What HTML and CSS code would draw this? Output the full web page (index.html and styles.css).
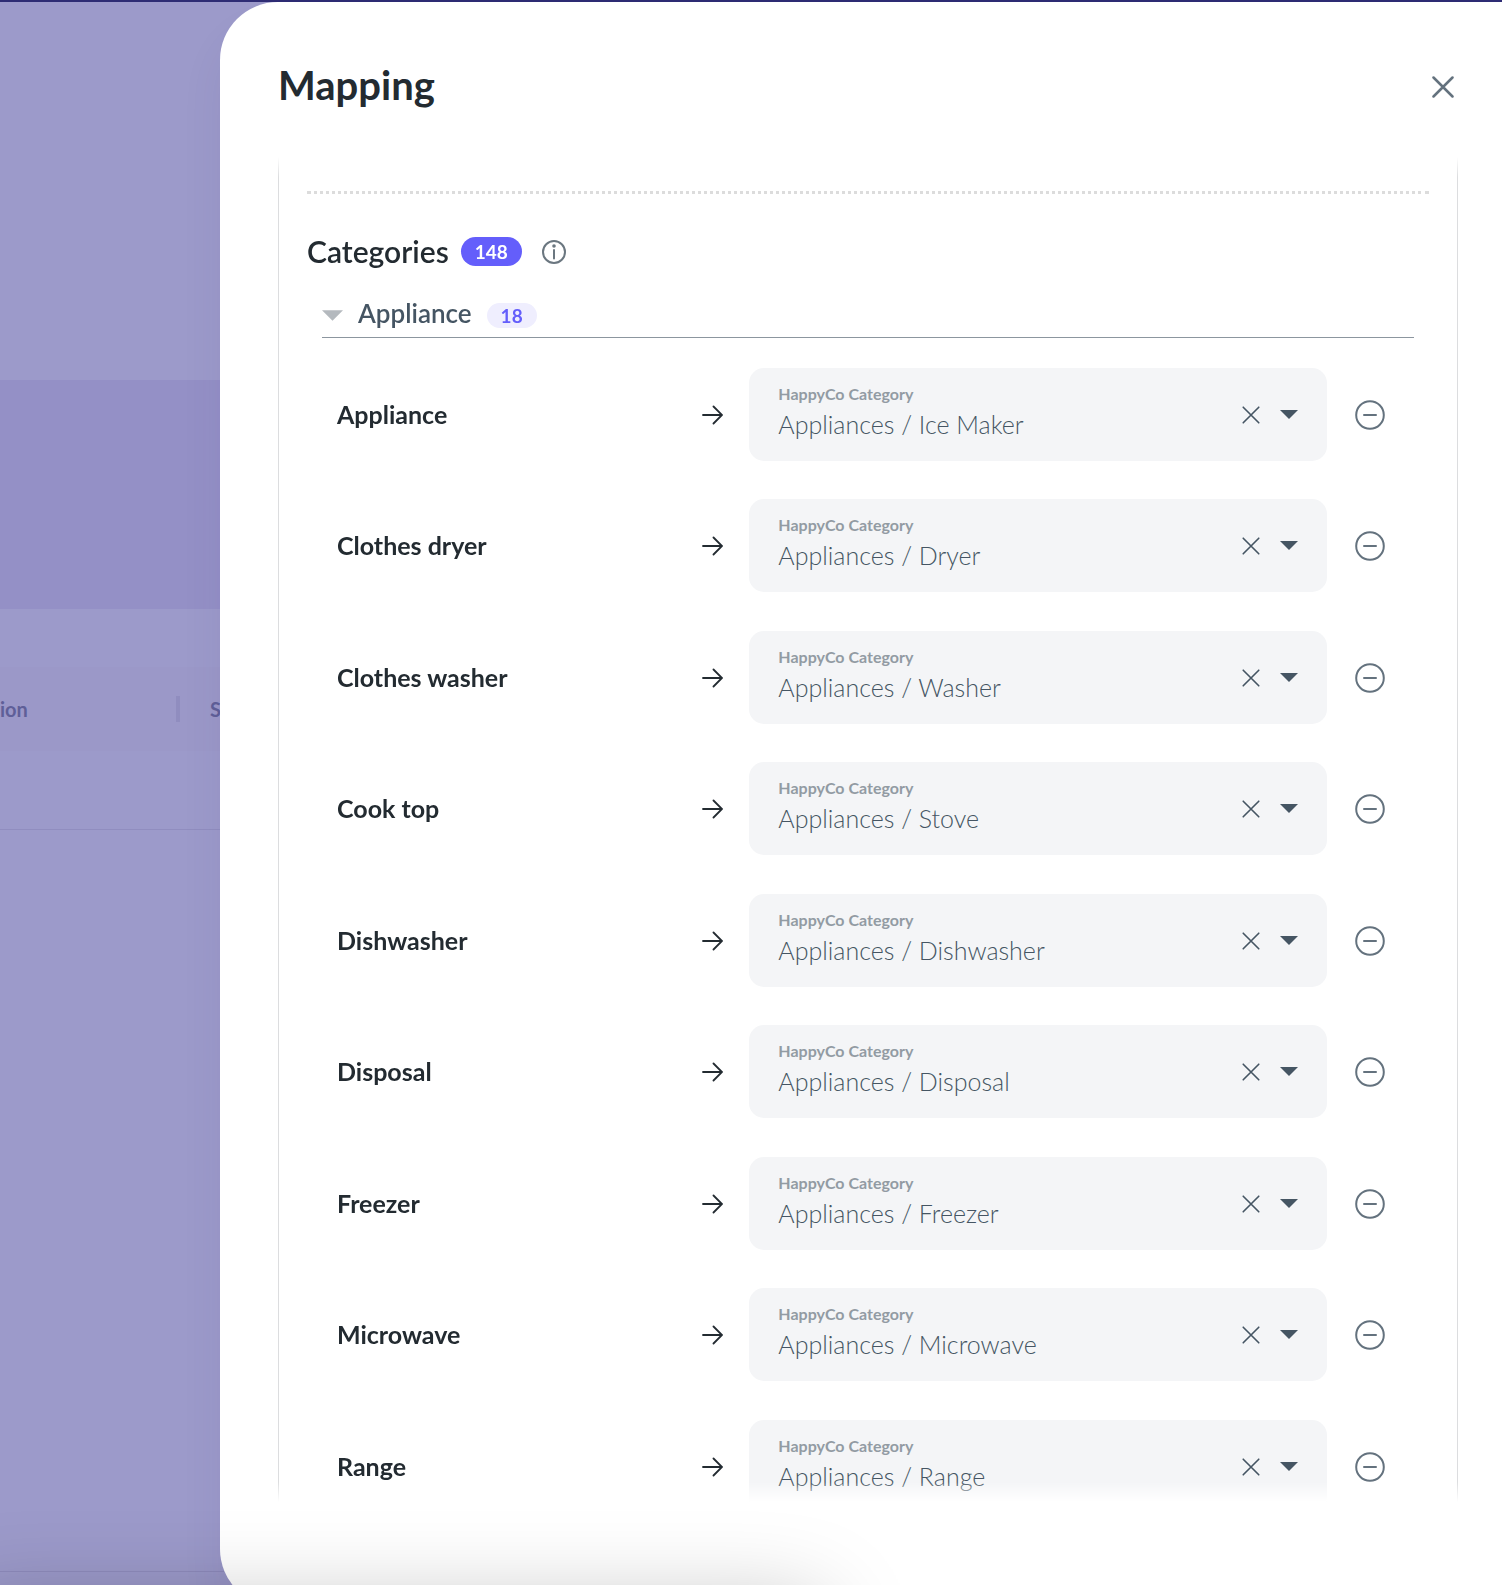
FILE: index.html
```html
<!DOCTYPE html>
<html lang="en">
<head>
<meta charset="UTF-8">
<meta name="viewport" content="width=device-width, initial-scale=1.0">
<title>Mapping</title>
<link rel="stylesheet" href="styles.css">
</head>
<body>
    <svg class="sprite" aria-hidden="true">
        <symbol id="arrow" viewBox="0 0 22 20"><path d="M2 10H21M12.5 1.5L21 10L12.5 18.5"/></symbol>
        <symbol id="cross" viewBox="0 0 22 22"><path d="M1.5 1.5L20.5 20.5M20.5 1.5L1.5 20.5"/></symbol>
        <symbol id="caret" viewBox="0 0 22 11"><path d="M0 0H22L11 11Z"/></symbol>
        <symbol id="minus" viewBox="0 0 30 30"><circle cx="15" cy="15" r="13.8"/><path d="M9 15H21"/></symbol>
    </svg>

    <!-- page behind the drawer -->
    <div class="page">
        <div class="page-bar"></div>
        <div class="page-top"></div>
        <div class="page-banner"></div>
        <div class="page-space"></div>
        <div class="page-head">
            <span>ion</span>
            <i class="divider"></i>
            <span>S</span>
        </div>
        <div class="page-row"></div>
        <div class="page-body"></div>
    </div>

    <div class="drawer" role="dialog" aria-labelledby="title">
        <header class="drawer-header">
            <h1 id="title">Mapping</h1>
            <button class="close" aria-label="Close"><svg><use href="#cross"/></svg></button>
        </header>
        <div class="scroll">
            <div class="box">
                <hr class="dots">
                <div class="section-head">
                    <h2>Categories</h2>
                    <span class="badge">148</span>
                    <button class="info" aria-label="Info">
                        <svg viewBox="0 0 24 24"><circle cx="12" cy="12" r="11"/><path d="M12 10V18.5"/><circle class="dot" cx="12" cy="6" r="1.8"/></svg>
                    </button>
                </div>
                <div class="group">
                    <button class="group-head">
                        <svg><use href="#caret"/></svg>
                        <span class="group-title">Appliance</span>
                        <span class="badge light">18</span>
                    </button>
                    <ul class="rows">
                        <li class="row">
                            <span class="name">Appliance</span>
                            <svg class="arrow"><use href="#arrow"/></svg>
                            <div class="field">
                                <div class="field-text">
                                    <label for="c1">HappyCo Category</label>
                                    <select id="c1"><option>Appliances / Ice Maker</option></select>
                                </div>
                                <button class="clear" aria-label="Clear"><svg><use href="#cross"/></svg></button>
                                <svg class="caret"><use href="#caret"/></svg>
                            </div>
                            <button class="remove" aria-label="Remove"><svg><use href="#minus"/></svg></button>
                        </li>
                        <li class="row">
                            <span class="name">Clothes dryer</span>
                            <svg class="arrow"><use href="#arrow"/></svg>
                            <div class="field">
                                <div class="field-text">
                                    <label for="c2">HappyCo Category</label>
                                    <select id="c2"><option>Appliances / Dryer</option></select>
                                </div>
                                <button class="clear" aria-label="Clear"><svg><use href="#cross"/></svg></button>
                                <svg class="caret"><use href="#caret"/></svg>
                            </div>
                            <button class="remove" aria-label="Remove"><svg><use href="#minus"/></svg></button>
                        </li>
                        <li class="row">
                            <span class="name">Clothes washer</span>
                            <svg class="arrow"><use href="#arrow"/></svg>
                            <div class="field">
                                <div class="field-text">
                                    <label for="c3">HappyCo Category</label>
                                    <select id="c3"><option>Appliances / Washer</option></select>
                                </div>
                                <button class="clear" aria-label="Clear"><svg><use href="#cross"/></svg></button>
                                <svg class="caret"><use href="#caret"/></svg>
                            </div>
                            <button class="remove" aria-label="Remove"><svg><use href="#minus"/></svg></button>
                        </li>
                        <li class="row">
                            <span class="name">Cook top</span>
                            <svg class="arrow"><use href="#arrow"/></svg>
                            <div class="field">
                                <div class="field-text">
                                    <label for="c4">HappyCo Category</label>
                                    <select id="c4"><option>Appliances / Stove</option></select>
                                </div>
                                <button class="clear" aria-label="Clear"><svg><use href="#cross"/></svg></button>
                                <svg class="caret"><use href="#caret"/></svg>
                            </div>
                            <button class="remove" aria-label="Remove"><svg><use href="#minus"/></svg></button>
                        </li>
                        <li class="row">
                            <span class="name">Dishwasher</span>
                            <svg class="arrow"><use href="#arrow"/></svg>
                            <div class="field">
                                <div class="field-text">
                                    <label for="c5">HappyCo Category</label>
                                    <select id="c5"><option>Appliances / Dishwasher</option></select>
                                </div>
                                <button class="clear" aria-label="Clear"><svg><use href="#cross"/></svg></button>
                                <svg class="caret"><use href="#caret"/></svg>
                            </div>
                            <button class="remove" aria-label="Remove"><svg><use href="#minus"/></svg></button>
                        </li>
                        <li class="row">
                            <span class="name">Disposal</span>
                            <svg class="arrow"><use href="#arrow"/></svg>
                            <div class="field">
                                <div class="field-text">
                                    <label for="c6">HappyCo Category</label>
                                    <select id="c6"><option>Appliances / Disposal</option></select>
                                </div>
                                <button class="clear" aria-label="Clear"><svg><use href="#cross"/></svg></button>
                                <svg class="caret"><use href="#caret"/></svg>
                            </div>
                            <button class="remove" aria-label="Remove"><svg><use href="#minus"/></svg></button>
                        </li>
                        <li class="row">
                            <span class="name">Freezer</span>
                            <svg class="arrow"><use href="#arrow"/></svg>
                            <div class="field">
                                <div class="field-text">
                                    <label for="c7">HappyCo Category</label>
                                    <select id="c7"><option>Appliances / Freezer</option></select>
                                </div>
                                <button class="clear" aria-label="Clear"><svg><use href="#cross"/></svg></button>
                                <svg class="caret"><use href="#caret"/></svg>
                            </div>
                            <button class="remove" aria-label="Remove"><svg><use href="#minus"/></svg></button>
                        </li>
                        <li class="row">
                            <span class="name">Microwave</span>
                            <svg class="arrow"><use href="#arrow"/></svg>
                            <div class="field">
                                <div class="field-text">
                                    <label for="c8">HappyCo Category</label>
                                    <select id="c8"><option>Appliances / Microwave</option></select>
                                </div>
                                <button class="clear" aria-label="Clear"><svg><use href="#cross"/></svg></button>
                                <svg class="caret"><use href="#caret"/></svg>
                            </div>
                            <button class="remove" aria-label="Remove"><svg><use href="#minus"/></svg></button>
                        </li>
                        <li class="row">
                            <span class="name">Range</span>
                            <svg class="arrow"><use href="#arrow"/></svg>
                            <div class="field">
                                <div class="field-text">
                                    <label for="c9">HappyCo Category</label>
                                    <select id="c9"><option>Appliances / Range</option></select>
                                </div>
                                <button class="clear" aria-label="Clear"><svg><use href="#cross"/></svg></button>
                                <svg class="caret"><use href="#caret"/></svg>
                            </div>
                            <button class="remove" aria-label="Remove"><svg><use href="#minus"/></svg></button>
                        </li>
                    </ul>
                </div>
            </div>
        </div>
    </div>
    <div class="bottom-shadow"></div>
</body>
</html>
```
FILE: styles.css
```css
* {
    box-sizing: border-box;
}
body {
    margin: 0;
    height: 100vh;
    overflow: hidden;
    position: relative;
    font-family: Lato, "Open Sans", sans-serif;
    color: #232b31;
    background: #9c9aca;
}
h1, h2, ul {
    margin: 0;
    padding: 0;
}
button {
    display: flex;
    align-items: center;
    justify-content: center;
    padding: 0;
    border: none;
    background: none;
    font: inherit;
    cursor: pointer;
}
svg {
    display: block;
    fill: none;
    stroke-linecap: round;
}
.sprite {
    position: absolute;
    width: 0;
    height: 0;
}

/* page behind the drawer */
.page {
    height: 100%;
    display: flex;
    flex-direction: column;
}
.page-bar {
    height: 2px;
    background: #2e2c74;
}
.page-top {
    height: 378px;
}
.page-banner {
    height: 229px;
    background: #9490c6;
}
.page-space {
    height: 58px;
}
.page-head {
    height: 84px;
    display: flex;
    align-items: center;
    background: #9b98c8;
    color: #5f5f98;
    font-size: 20px;
    font-weight: 700;
}
.page-head span:first-child {
    width: 176px;
}
.divider {
    width: 4px;
    height: 26px;
    margin-right: 30px;
    background: #908dbf;
}
.page-row {
    height: 79px;
    border-bottom: 1px solid #908dbf;
}
.page-body {
    flex: 1;
    margin-bottom: 13px;
    border-bottom: 1px solid #8f8cbd;
}

/* drawer */
.drawer {
    position: absolute;
    top: 2px;
    right: 0;
    bottom: -22px;
    left: 220px;
    display: flex;
    flex-direction: column;
    padding: 0 44px 105px 58px;
    background: #fff;
    border-radius: 58px 0 0 58px;
    box-shadow: 0 30px 40px rgba(60, 50, 120, 0.08);
}
.drawer-header {
    height: 155px;
    flex: none;
    display: flex;
    align-items: center;
    justify-content: space-between;
    padding-top: 14px;
}
h1 {
    font-size: 40px;
    line-height: 48px;
    font-weight: 700;
    padding-bottom: 4px;
}
.close {
    width: 30px;
    height: 30px;
}
.close svg {
    width: 22px;
    height: 22px;
    stroke: #64727e;
    stroke-width: 2.5;
}
.scroll {
    flex: 1;
    min-height: 0;
    overflow: hidden;
    -webkit-mask-image: linear-gradient(transparent, #000 20px, #000 calc(100% - 20px), transparent);
    mask-image: linear-gradient(transparent, #000 20px, #000 calc(100% - 20px), transparent);
}
.box {
    padding: 34px 28px;
    border: solid #dcdddf;
    border-width: 0 1px;
}
.dots {
    margin: 0;
    border: none;
    border-top: 3px dotted #dcdcdc;
    height: 3px;
}
.section-head {
    display: flex;
    align-items: center;
    height: 29px;
    margin-top: 43px;
}
h2 {
    font-size: 30px;
    line-height: 29px;
    font-weight: 600;
}
.badge {
    padding: 0 14px;
    margin-left: 12px;
    border-radius: 15px;
    background: #645efb;
    color: #fff;
    font-size: 19px;
    line-height: 29px;
    font-weight: 700;
}
.light {
    margin-left: 15px;
    background: #efeefe;
    color: #645efb;
    line-height: 25px;
}
.info {
    width: 24px;
    height: 24px;
    margin-left: 20px;
}
.info svg {
    width: 24px;
    height: 24px;
    stroke: #6b7780;
    stroke-width: 2;
}
.info .dot {
    fill: #6b7780;
    stroke: none;
}
.group {
    margin: 37px 15px 0;
}
.group-head {
    width: 100%;
    height: 35px;
    justify-content: flex-start;
    padding-bottom: 9px;
    border-bottom: 1px solid #8c969f;
    color: #455563;
}
.group-title {
    font-size: 26px;
    line-height: 25px;
    font-weight: 600;
    padding-bottom: 4px;
}
.group-head svg {
    width: 21px;
    height: 11px;
    margin-right: 15px;
    fill: #b4b9be;
}

/* mapping rows */
.rows {
    list-style: none;
    display: grid;
    grid-auto-rows: 131px 132px;
    padding-top: 30px;
}
.row {
    align-self: start;
    display: grid;
    grid-template-columns: minmax(0, 41fr) 22px minmax(0, 70fr) 34px;
    column-gap: 26px;
    align-items: center;
    padding: 0 27px 0 15px;
}
.name {
    font-size: 25px;
    line-height: 30px;
    font-weight: 700;
    padding-bottom: 2px;
}
.arrow {
    width: 22px;
    height: 20px;
    stroke: #232b31;
    stroke-width: 1.8;
}
.field {
    display: flex;
    align-items: center;
    height: 93px;
    padding: 0 29px;
    border-radius: 15px;
    background: #f4f5f7;
}
.field-text {
    flex: 1;
    min-width: 0;
    display: flex;
    flex-direction: column;
    padding-bottom: 2px;
}
.field-text label {
    font-size: 16px;
    line-height: 20px;
    font-weight: 700;
    color: #929ba3;
}
.field-text select {
    appearance: none;
    width: 100%;
    height: 40px;
    padding: 0;
    border: none;
    background: none;
    font-family: inherit;
    font-size: 25px;
    font-weight: 300;
    color: #455563;
}
.clear {
    width: 18px;
    height: 18px;
    margin-right: 20px;
}
.clear svg {
    width: 18px;
    height: 18px;
    stroke: #455563;
    stroke-width: 2;
}
.caret {
    width: 18px;
    height: 9px;
    fill: #455563;
}
.remove {
    height: 34px;
}
.remove svg {
    width: 30px;
    height: 30px;
    stroke: #64727e;
    stroke-width: 2;
}

/* shadow cast from below the window edge */
.bottom-shadow {
    position: absolute;
    top: 100%;
    left: -40px;
    width: 860px;
    height: 100px;
    margin-top: 20px;
    box-shadow: 0 0 90px rgba(0, 0, 0, 0.25);
}
```
